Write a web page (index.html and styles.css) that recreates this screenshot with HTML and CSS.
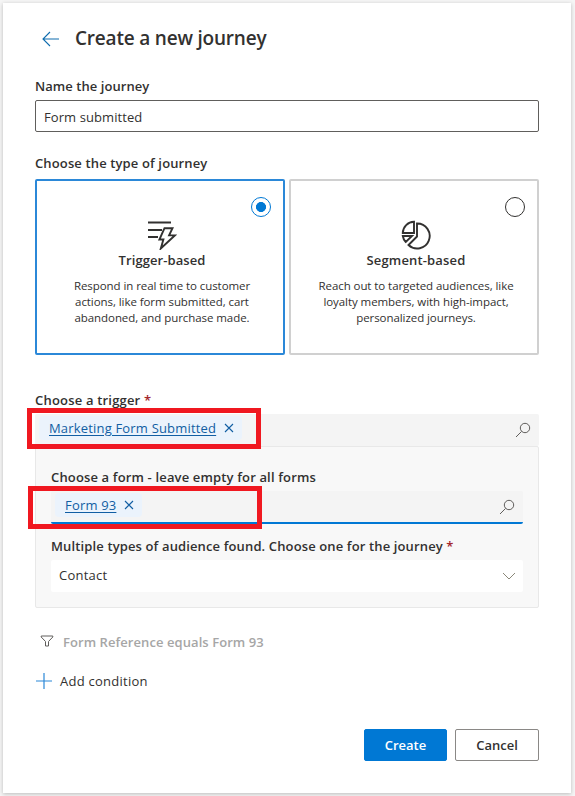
FILE: index.html
```
<!DOCTYPE html>
<html lang="en">
<head>
<meta charset="utf-8">
<title>Create a new journey</title>
<link rel="stylesheet" href="styles.css">
</head>
<body>
<main class="dialog">
  <header class="header">
    <svg class="back" width="18" height="16" viewBox="0 0 18 16"><path d="M17 8H1M8 1L1 8l7 7"/></svg>
    <h1 class="title">Create a new journey</h1>
  </header>

  <div class="label label-name">Name the journey</div>
  <div class="input">Form submitted</div>

  <div class="label label-type">Choose the type of journey</div>
  <div class="cards">
    <section class="card selected">
      <span class="radio"></span>
      <svg class="card-icon" width="30" height="30" viewBox="0 0 30 30"><path d="M1 2.500h23M1 10h14M1 17h10"/><path d="M17.500 8.200h8l-3.400 7.200h5.700L13.800 28.500l2.600-9h-4z"/></svg>
      <h2 class="card-title">Trigger-based</h2>
      <p class="card-text">Respond in real time to customer<br>actions, like form submitted, cart<br>abandoned, and purchase made.</p>
    </section>
    <section class="card">
      <span class="radio"></span>
      <svg class="card-icon" width="30" height="30" viewBox="0 0 30 30"><path d="M13 1.800V13H1.800A11.500 11.500 0 0 1 13 1.800zM16 3.500V16.500L7.500 25A12.500 12.500 0 1 0 16 3.500zM1.800 16H11L4.800 22A11 11 0 0 1 1.800 16z"/></svg>
      <h2 class="card-title card-title-segment">Segment-based</h2>
      <p class="card-text">Reach out to targeted audiences, like<br>loyalty members, with high-impact,<br>personalized journeys.</p>
    </section>
  </div>

  <div class="label label-trigger">Choose a trigger <span class="required">*</span></div>
  <div class="lookup">
    <span class="tag"><a>Marketing Form Submitted</a><svg class="remove" width="10" height="10" viewBox="0 0 10 10"><path d="M1 1l8 8M9 1L1 9"/></svg></span>
    <svg class="search" width="16" height="16" viewBox="0 0 16 16"><circle cx="10" cy="6" r="4.700"/><path d="M6.600 9.400L1 15"/></svg>
    <span class="highlight"></span>
  </div>
  <div class="panel">
    <div class="label label-form">Choose a form - leave empty for all forms</div>
    <div class="lookup focused">
      <span class="tag"><a>Form 93</a><svg class="remove" width="10" height="10" viewBox="0 0 10 10"><path d="M1 1l8 8M9 1L1 9"/></svg></span>
      <svg class="search" width="16" height="16" viewBox="0 0 16 16"><circle cx="10" cy="6" r="4.700"/><path d="M6.600 9.400L1 15"/></svg>
      <span class="highlight"></span>
    </div>
    <div class="label label-audience">Multiple types of audience found. Choose one for the journey <span class="required">*</span></div>
    <div class="dropdown">Contact<svg class="chevron" width="14" height="8" viewBox="0 0 14 8"><path d="M1 1l6 6 6-6"/></svg></div>
  </div>

  <div class="condition">
    <svg class="filter" width="14" height="13" viewBox="0 0 14 13"><path d="M1.200 1h11.600v1L8.500 6.500V11h-3V6.500L1.200 2z"/></svg>
    <span>Form Reference equals Form 93</span>
  </div>
  <div class="add">
    <svg class="plus" width="16" height="16" viewBox="0 0 16 16"><path d="M8 0v16M0 8h16"/></svg>
    <span>Add condition</span>
  </div>

  <footer class="footer">
    <button class="btn primary">Create</button>
    <button class="btn">Cancel</button>
  </footer>
</main>
</body>
</html>
```
FILE: styles.css
```
* { box-sizing: border-box; }
body {
  margin: 0;
  padding: 3px 4px 3px 3px;
  background: #f5f5f5;
  color: #323130;
  font: 13px/20px "Open Sans", "Noto Sans", sans-serif;
}
svg { display: block; flex: none; fill: none; }
h1, h2, p { margin: 0; }
.dialog {
  height: 790px;
  padding: 19px 32px 0;
  background: #fff;
  box-shadow: 0 1px 4px rgba(0, 0, 0, .24);
}
.header { display: flex; align-items: center; height: 32px; padding-left: 7px; margin-bottom: 22px; }
.back { stroke: #0f6cae; stroke-width: 1.1; margin-top: 2px; }
.title { margin-left: 15px; font-size: 19px; line-height: 28px; font-weight: 600; letter-spacing: -.2px; }
.label { height: 20px; font-weight: 600; white-space: nowrap; letter-spacing: .13px; }
.label-name { letter-spacing: .06px; }
.required { color: #a4262c; }
.input {
  height: 32px;
  margin-top: 4px;
  padding: 6px 8px;
  line-height: 20px;
  letter-spacing: .08px;
  border: 1px solid #605e5c;
  border-radius: 2px;
}
.label-type { margin-top: 21px; }
.cards { display: grid; grid-template-columns: 250px 250px; gap: 4px; margin-top: 6px; }
.card {
  position: relative;
  display: flex;
  flex-direction: column;
  align-items: center;
  height: 176px;
  padding: 39px 0 0 4px;
  border: 2px solid #d0d0d0;
  border-radius: 2px;
  text-align: center;
}
.card.selected { border-color: #2b88d8; }
.radio {
  position: absolute;
  top: 16px;
  right: 12px;
  width: 20px;
  height: 20px;
  border: 1px solid #323130;
  border-radius: 50%;
}
.selected .radio { border-color: #0078d4; background: radial-gradient(circle, #0078d4 4.700px, #fff 5.300px); }
.card-icon { stroke: #323130; stroke-width: 1.900; }
.card-title { font-size: 13px; line-height: 20px; font-weight: 600; letter-spacing: .08px; }
.card-title-segment { letter-spacing: .16px; }
.card-text { margin-top: 8px; font-size: 11.500px; line-height: 16px; white-space: nowrap; letter-spacing: -.07px; }
.label-trigger { margin-top: 35px; letter-spacing: .19px; }
.lookup {
  position: relative;
  display: flex;
  justify-content: space-between;
  height: 32px;
  margin-top: 4px;
  padding: 2px 8px 0 4px;
  background: #f4f4f4;
  border-radius: 2px;
}
.tag {
  display: flex;
  align-items: center;
  gap: 8px;
  height: 24px;
  padding: 0 8px 0 10px;
  border-radius: 4px;
  background: #ebf3fc;
  color: #115ea3;
  letter-spacing: .18px;
}
.tag a { text-decoration: underline; text-underline-offset: 2px; }
.remove { stroke: #115ea3; stroke-width: 1.100; }
.search { margin-top: 6px; stroke: #605e5c; stroke-width: 1; }
.highlight { position: absolute; left: -8px; top: -6px; width: 234px; height: 41px; border: 5px solid #f01820; }
.panel { height: 162px; padding: 20px 15px 0; border: 1px solid #e8e8e8; border-radius: 2px; background: #f8f8f8; }
.label-form { letter-spacing: .15px; }
.focused { height: 33px; border-bottom: 2px solid #0078d4; }
.focused .highlight { left: -23px; top: -5px; height: 43px; }
.label-audience { margin-top: 12px; }
.dropdown {
  display: flex;
  align-items: center;
  justify-content: space-between;
  height: 32px;
  margin-top: 4px;
  padding: 0 7px 2px 8px;
  letter-spacing: .25px;
  background: #fff;
  border-radius: 2px;
}
.chevron { margin-top: 2px; stroke: #8a8778; }
.condition { display: flex; align-items: center; gap: 9px; margin-top: 24px; padding-left: 5px; color: #a6a6a6; font-weight: 600; letter-spacing: .07px; }
.filter { margin-top: -1px; stroke: #605e5c; }
.add { display: flex; align-items: center; gap: 8px; margin-top: 19px; padding-left: 1px; letter-spacing: .25px; }
.plus { stroke: #2b88d8; stroke-width: 1.200; }
.footer { display: flex; justify-content: flex-end; gap: 8px; margin-top: 38px; }
.btn {
  width: 84px;
  height: 32px;
  padding: 0;
  border: 1px solid #8a8886;
  border-radius: 2px;
  background: #fff;
  color: #323130;
  font: 600 13px/20px "Open Sans", "Noto Sans", sans-serif;
}
.btn.primary { width: 83px; border-color: #0078d4; background: #0078d4; color: #fff; }
```
